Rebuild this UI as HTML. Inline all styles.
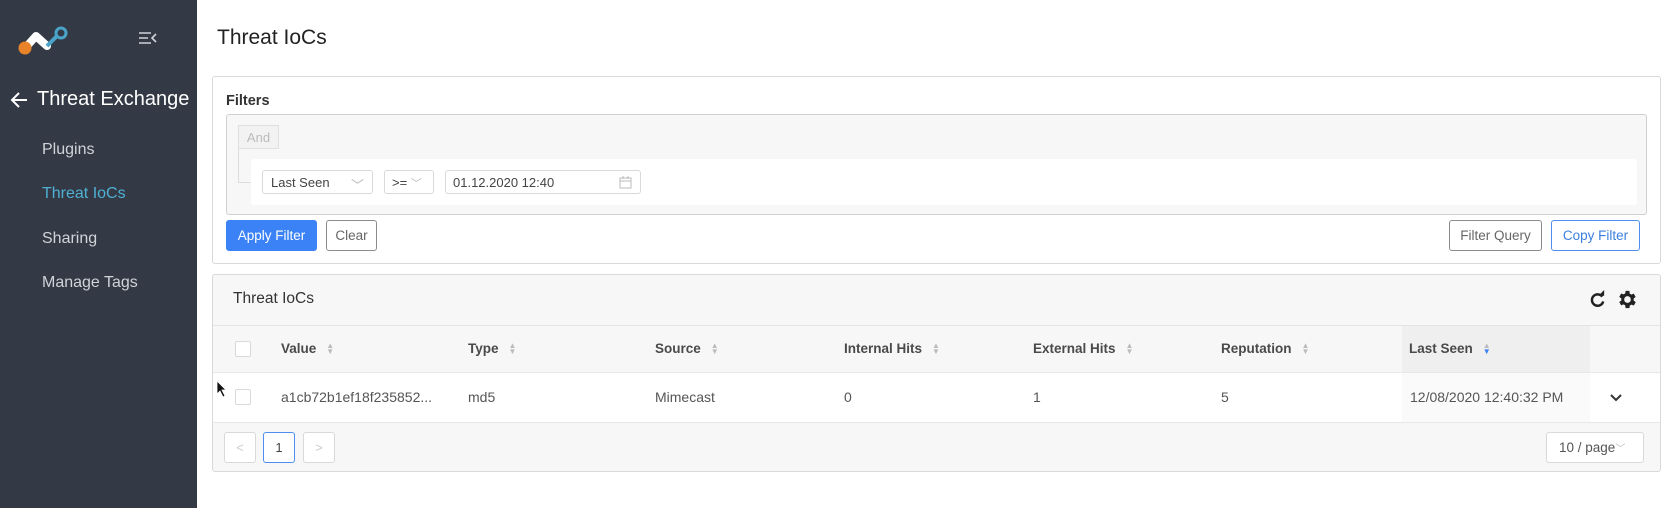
<!DOCTYPE html>
<html><head><style>
*{box-sizing:border-box;margin:0;padding:0}
body{width:1673px;height:508px;overflow:hidden;background:#fff;font-family:"Liberation Sans",sans-serif;color:#333;position:relative}
.abs{position:absolute}
.sb{left:0;top:0;width:197px;height:508px;background:#343a45}
.nav{position:absolute;left:42px;font-size:16px;color:#d0d3d8}
.box{position:absolute;border:1px solid #d9d9d9;border-radius:3px;background:#fff}
.btn{position:absolute;border:1px solid #8c8c8c;border-radius:3px;font-size:13.5px;color:#666;display:flex;align-items:center;justify-content:center;background:#fff}
.th{position:absolute;top:341px;font-size:13.5px;font-weight:bold;color:#4a4a4a}
.td{position:absolute;top:389px;font-size:14px;color:#555}
.sort{display:inline-block;margin-left:10px;font-size:8px;color:#bbb;line-height:6px;vertical-align:middle}
.cb{position:absolute;left:235px;width:16px;height:16px;border:1px solid #d9d9d9;border-radius:2px;background:#fff}
</style></head><body>
<div class="abs sb"></div>
<svg class="abs" style="left:15px;top:24px" width="54" height="32" viewBox="0 0 54 32">
<path d="M12 22L21 12L32 22" stroke="#fff" stroke-width="8" stroke-linecap="round" stroke-linejoin="round" fill="none"/>
<line x1="32" y1="22" x2="42" y2="12" stroke="#4aa3c8" stroke-width="4"/>
<circle cx="10" cy="24" r="6.5" fill="#e8832a"/>
<circle cx="46" cy="9" r="5" fill="none" stroke="#4aa3c8" stroke-width="3"/>
</svg>
<svg class="abs" style="left:138px;top:30px" width="20" height="16" viewBox="0 0 20 16"><path d="M1 3h12M1 8h9M1 13h12M18 4l-4 4 4 4" stroke="#d0d3d8" stroke-width="1.6" fill="none"/></svg>
<svg class="abs" style="left:10px;top:91px" width="20" height="18" viewBox="0 0 20 18"><path d="M17 9H3M9 2L2 9l7 7" stroke="#fff" stroke-width="2" fill="none"/></svg>
<div class="abs" style="left:37px;top:88px;font-size:20px;color:#fff">Threat Exchange</div>
<div class="nav" style="top:141px">Plugins</div>
<div class="nav" style="top:185px;color:#4fb0d4">Threat IoCs</div>
<div class="nav" style="top:230px">Sharing</div>
<div class="nav" style="top:274px">Manage Tags</div>

<div class="abs" style="left:217px;top:26px;font-size:21px;color:#222">Threat IoCs</div>

<div class="box" style="left:212px;top:76px;width:1449px;height:188px"></div>
<div class="abs" style="left:226px;top:93px;font-size:14.5px;font-weight:bold;color:#333">Filters</div>
<div class="abs" style="left:226px;top:114px;width:1421px;height:101px;border:1px solid #d0d0d0;border-radius:3px;background:#f7f7f7"></div>
<div class="abs" style="left:238px;top:148px;width:14px;height:35px;border-left:1px solid #ddd;border-bottom:1px solid #ddd"></div>
<div class="abs" style="left:238px;top:125px;width:41px;height:24px;border:1px solid #e0e0e0;background:#f2f2f2;color:#bbb;font-size:13px;display:flex;align-items:center;justify-content:center">And</div>
<div class="abs" style="left:251px;top:159px;width:1386px;height:46px;background:#fff;border-radius:3px"></div>
<div class="box" style="left:262px;top:170px;width:111px;height:24px;font-size:13px;color:#444;padding:4px 8px">Last Seen<span style="position:absolute;right:8px;color:#bbb">﹀</span></div>
<div class="box" style="left:384px;top:170px;width:50px;height:24px;font-size:13px;color:#444;padding:4px 7px">&gt;= <span style="color:#bbb;font-size:11px">﹀</span></div>
<div class="box" style="left:445px;top:170px;width:196px;height:24px;font-size:13px;color:#444;padding:4px 7px">01.12.2020 12:40
<svg style="position:absolute;right:8px;top:5px" width="13" height="13" viewBox="0 0 13 13"><rect x="1" y="2" width="11" height="10" fill="none" stroke="#bbb"/><path d="M1 5h11M4 0v3M9 0v3" stroke="#bbb"/></svg></div>
<div class="btn" style="left:226px;top:220px;width:91px;height:31px;background:#3b82f6;border-color:#3b82f6;color:#fff">Apply Filter</div>
<div class="btn" style="left:326px;top:220px;width:51px;height:31px">Clear</div>
<div class="btn" style="left:1449px;top:220px;width:93px;height:31px">Filter Query</div>
<div class="btn" style="left:1551px;top:220px;width:89px;height:31px;border-color:#4f8ef0;color:#3b7fe0">Copy Filter</div>

<div class="box" style="left:212px;top:274px;width:1449px;height:198px;background:#f7f7f7;overflow:hidden">
 <div class="abs" style="left:0;top:50px;width:1449px;height:1px;background:#e4e4e4"></div>
 <div class="abs" style="left:0;top:97px;width:1449px;height:51px;background:#fff;border-top:1px solid #e8e8e8;border-bottom:1px solid #e8e8e8"></div>
 <div class="abs" style="left:1189px;top:51px;width:188px;height:46px;background:#efefef"></div>
 <div class="abs" style="left:1189px;top:98px;width:188px;height:49px;background:#fafafa"></div>
</div>
<div class="abs" style="left:233px;top:290px;font-size:15.5px;color:#333">Threat IoCs</div>
<svg class="abs" style="left:1588px;top:290px" width="19" height="19" viewBox="0 0 20 20"><path d="M15 7A6 6 0 1 0 16 12" stroke="#222" stroke-width="2.6" fill="none"/><path d="M11 6h6V0z" fill="#222"/></svg>
<svg class="abs" style="left:1616px;top:288px" width="23" height="23" viewBox="0 0 24 24"><path fill="#222" d="M19.4 13a7.5 7.5 0 0 0 0-2l2.1-1.6-2-3.5-2.5 1a7 7 0 0 0-1.7-1L15 3h-4l-.4 2.7a7 7 0 0 0-1.7 1l-2.5-1-2 3.5L6.6 11a7.5 7.5 0 0 0 0 2l-2.2 1.6 2 3.5 2.5-1a7 7 0 0 0 1.7 1L11 21h4l.4-2.7a7 7 0 0 0 1.7-1l2.5 1 2-3.5zM13 15.5a3.5 3.5 0 1 1 0-7 3.5 3.5 0 0 1 0 7z" transform="translate(-1 0)"/></svg>

<div class="cb" style="top:341px"></div>
<div class="th" style="left:281px">Value<span class="sort">▲<br>▼</span></div>
<div class="th" style="left:468px">Type<span class="sort">▲<br>▼</span></div>
<div class="th" style="left:655px">Source<span class="sort">▲<br>▼</span></div>
<div class="th" style="left:844px">Internal Hits<span class="sort">▲<br>▼</span></div>
<div class="th" style="left:1033px">External Hits<span class="sort">▲<br>▼</span></div>
<div class="th" style="left:1221px">Reputation<span class="sort">▲<br>▼</span></div>
<div class="th" style="left:1409px">Last Seen<span class="sort">▲<br><span style="color:#3b82f6">▼</span></span></div>

<svg class="abs" style="left:216px;top:380px" width="12" height="18" viewBox="0 0 12 18"><path d="M1 1v13l3-3 3 6 2-1-3-6h4z" fill="#111" stroke="#fff" stroke-width=".8"/></svg>
<div class="cb" style="top:389px"></div>
<div class="td" style="left:281px">a1cb72b1ef18f235852...</div>
<div class="td" style="left:468px">md5</div>
<div class="td" style="left:655px">Mimecast</div>
<div class="td" style="left:844px">0</div>
<div class="td" style="left:1033px">1</div>
<div class="td" style="left:1221px">5</div>
<div class="td" style="left:1410px">12/08/2020 12:40:32 PM</div>
<svg class="abs" style="left:1609px;top:393px" width="14" height="10" viewBox="0 0 14 10"><path d="M2 2l5 5 5-5" stroke="#333" stroke-width="2" fill="none"/></svg>

<div class="box" style="left:224px;top:432px;width:32px;height:31px;color:#ccc;font-size:13px;display:flex;align-items:center;justify-content:center">&lt;</div>
<div class="box" style="left:263px;top:432px;width:32px;height:31px;border-color:#4f8ef0;font-size:13px;display:flex;align-items:center;justify-content:center;color:#444">1</div>
<div class="box" style="left:303px;top:432px;width:32px;height:31px;color:#ccc;font-size:13px;display:flex;align-items:center;justify-content:center">&gt;</div>
<div class="box" style="left:1546px;top:432px;width:98px;height:31px;font-size:13.5px;color:#555;padding:7px 12px">10 / page<span style="color:#bbb;font-size:10px">﹀</span></div>
</body></html>
